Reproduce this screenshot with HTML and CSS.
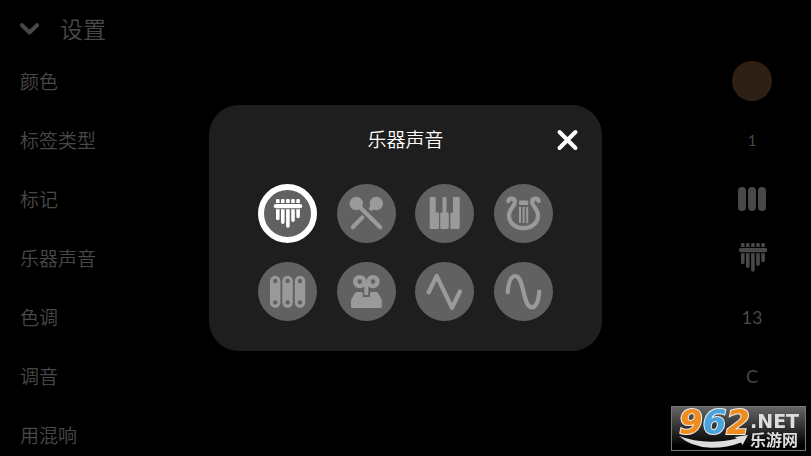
FILE: index.html
```html
<!DOCTYPE html>
<html lang="zh-CN">
<head>
  <meta charset="UTF-8" />
  <meta name="viewport" content="width=device-width, initial-scale=1.0" />
  <title>设置</title>
  <link rel="stylesheet" href="styles.css">
</head>
<body>

<main class="settings">
  <header class="settings-header">
    <button class="back-btn" aria-label="返回">
      <svg width="20" height="20" viewBox="0 0 20 20"><path d="M2 6.2l7.5 7.3L17 6.2" /></svg>
    </button>
    <h1>设置</h1>
  </header>

  <div class="row">
    <span id="color">颜色</span>
    <button class="value" aria-labelledby="color"><span class="swatch"></span></button>
  </div>
  <div class="row">
    <span id="label-type">标签类型</span>
    <button class="value small" aria-describedby="label-type">1</button>
  </div>
  <div class="row">
    <span id="marker">标记</span>
    <button class="value" aria-labelledby="marker">
      <svg class="marker" width="28" height="24" viewBox="0 0 28 24">
        <rect width="8" height="24" rx="4" />
        <rect x="10" width="8" height="24" rx="4" />
        <rect x="20" width="8" height="24" rx="4" />
      </svg>
    </button>
  </div>
  <div class="row">
    <span id="sound">乐器声音</span>
    <button class="value" aria-labelledby="sound">
      <svg class="icon"><use href="#kalimba" /></svg>
    </button>
  </div>
  <div class="row">
    <span id="keys">色调</span>
    <button class="value" aria-describedby="keys">13</button>
  </div>
  <div class="row">
    <span id="tuning">调音</span>
    <button class="value" aria-describedby="tuning">C</button>
  </div>
  <div class="row">
    <label for="reverb">用混响</label>
    <input class="switch" type="checkbox" id="reverb" />
  </div>
</main>

<div class="overlay">
  <section class="modal" role="dialog" aria-modal="true" aria-labelledby="modal-title">
    <header class="modal-header">
      <h2 id="modal-title">乐器声音</h2>
      <button class="close-btn" aria-label="关闭">
        <svg width="30" height="30" viewBox="0 0 30 30"><path d="M7.5 7l16 16M23.5 7l-16 16" /></svg>
      </button>
    </header>

    <div class="options">
      <label class="option">
        <input type="radio" name="instrument" aria-label="卡林巴" checked />
        <svg class="icon"><use href="#kalimba" /></svg>
      </label>
      <label class="option">
        <input type="radio" name="instrument" aria-label="马林巴" />
        <svg class="icon" viewBox="0 0 59 59">
          <circle cx="19.3" cy="19.5" r="6.7" />
          <circle cx="39.3" cy="19.5" r="6.7" />
          <path class="line" d="M19.3 19.5L43.2 43.3M25.2 33.6L15.8 43.3" />
          <path class="line butt" d="M38 20.8L32.8 26" />
        </svg>
      </label>
      <label class="option">
        <input type="radio" name="instrument" aria-label="钢琴" />
        <svg class="icon" viewBox="0 0 59 59">
          <path d="M15.7 13h4a1 1 0 0 1 1 1v14.5h2q1.3 0 1.3 1.3V43.5a1.5 1.5 0 0 1-1.5 1.5h-6.3a1.5 1.5 0 0 1-1.5-1.5V14a1 1 0 0 1 1-1z" />
          <path d="M28.5 13h2a1 1 0 0 1 1 1v14.5h1q1.3 0 1.3 1.3V43.5a1.5 1.5 0 0 1-1.5 1.5h-5.6a1.5 1.5 0 0 1-1.5-1.5V29.8q0-1.3 1.3-1.3h1V14a1 1 0 0 1 1-1z" />
          <path d="M39 13h4.7a1 1 0 0 1 1 1V43.5a1.5 1.5 0 0 1-1.5 1.5h-6.3a1.5 1.5 0 0 1-1.5-1.5V29.8q0-1.3 1.3-1.3H38V14a1 1 0 0 1 1-1z" />
        </svg>
      </label>
      <label class="option">
        <input type="radio" name="instrument" aria-label="竖琴" />
        <svg class="icon" viewBox="0 0 59 59">
          <path class="line" d="M14.3 17C15 13.6 20.8 13.6 20.9 18C21 22.5 15 24 15 31.5C15 39 21.5 44.2 29.5 44.2S44 39 44 31.5C44 24 38 22.5 38.1 18C38.2 13.6 44 13.6 44.7 17" />
          <rect x="25" y="16.5" width="9.3" height="4.5" rx="1" />
          <path d="M25 23h2v16h-2zM28.6 23h2v16h-2zM32.2 23h2v16h-2z" />
        </svg>
      </label>
      <label class="option">
        <input type="radio" name="instrument" aria-label="木琴" />
        <svg class="icon" viewBox="0 0 59 59">
          <rect x="12" y="13.7" width="10.4" height="32" rx="5.2" />
          <rect x="24.4" y="13.7" width="10.4" height="32" rx="5.2" />
          <rect x="36.8" y="13.7" width="10.4" height="32" rx="5.2" />
          <g class="hole">
            <circle cx="17.2" cy="19" r="2.2" />
            <circle cx="29.6" cy="19" r="2.2" />
            <circle cx="42" cy="19" r="2.2" />
            <circle cx="17.2" cy="40.4" r="2.2" />
            <circle cx="29.6" cy="40.4" r="2.2" />
            <circle cx="42" cy="40.4" r="2.2" />
          </g>
        </svg>
      </label>
      <label class="option">
        <input type="radio" name="instrument" aria-label="八音盒" />
        <svg class="icon" viewBox="0 0 59 59">
          <circle cx="22.7" cy="19.6" r="6.7" />
          <circle cx="36" cy="19.6" r="6.7" />
          <path d="M26 20h6.7l-1.4 5v8h-4v-8z" />
          <path d="M19.5 30h5.3l1 1.2V35H33v-3.8l1-1.2h5.5q1 0 1.5 1l3.3 6q.6 1 .6 2V44.6a1.5 1.5 0 0 1-1.5 1.5H15.5a1.5 1.5 0 0 1-1.5-1.5V39q0-1 .6-2l3.4-6q.5-1 1.5-1z" />
          <g class="hole">
            <circle cx="22.7" cy="19.6" r="2.3" />
            <circle cx="36" cy="19.6" r="2.3" />
          </g>
        </svg>
      </label>
      <label class="option">
        <input type="radio" name="instrument" aria-label="三角波" />
        <svg class="icon" viewBox="0 0 59 59"><path class="line" d="M13.7 30.2L21.7 14L37 45.8L45 29.5" /></svg>
      </label>
      <label class="option">
        <input type="radio" name="instrument" aria-label="正弦波" />
        <svg class="icon" viewBox="0 0 59 59"><path class="line" d="M13.7 30.2C14.5 20 17 14 21.4 14C30 14 29 45.3 37.5 45.3C42 45.3 44.5 39.5 45.3 29.5" /></svg>
      </label>
    </div>
  </section>
</div>

<div class="watermark">
  <div class="digits"><span>9</span><span class="blue">6</span><span>2</span></div>
  <div class="site">
    <b class="net">.NET</b>
    <b class="name">乐游网</b>
  </div>
  <svg class="swoosh" width="70" height="14" viewBox="0 0 70 14"><path d="M0 1Q26 11 58 3.5L55.5 2L69 0L63.5 10L62 7.5Q48 13 32 12.8Q12 12 0 1z" /></svg>
</div>

<svg width="0" height="0" aria-hidden="true">
  <symbol id="kalimba" viewBox="0 0 59 59">
    <rect x="15.8" y="20" width="28.4" height="4.3" rx="2" />
    <path d="M18 19v-3q0-1 1-1h1.6q1 0 1 1v3zM23 19v-3q0-1 1-1h1.6q1 0 1 1v3zM28.1 19v-3q0-1 1-1h1.6q1 0 1 1v3zM33.2 19v-3q0-1 1-1h1.6q1 0 1 1v3zM38.3 19v-3q0-1 1-1h1.6q1 0 1 1v3z" />
    <path d="M18 25.3h3.6v9.2a1.8 1.8 0 0 1-3.6 0zM23 25.3h3.6v13a1.8 1.8 0 0 1-3.6 0zM28.1 25.3h3.6v16.7a1.8 1.8 0 0 1-3.6 0zM33.2 25.3h3.6v11a1.8 1.8 0 0 1-3.6 0zM38.3 25.3h3.6v7.2a1.8 1.8 0 0 1-3.6 0z" />
  </symbol>
</svg>

</body>
</html>
```
FILE: styles.css
```css
* {
  box-sizing: border-box;
}
body {
  margin: 0;
  height: 100vh;
  overflow: hidden;
  background-color: #000;
  color: #fff;
  font-family: Lato, 'Noto Sans CJK SC', sans-serif;
  font-size: 19px;
  font-weight: 350;
}
button {
  padding: 0;
  border: none;
  background: none;
  color: inherit;
  font: inherit;
  cursor: pointer;
}
h1, h2 {
  margin: 0;
  font-weight: 350;
}
svg {
  display: block;
  fill: currentColor;
}
.icon {
  width: 59px;
  height: 59px;
}
.line {
  fill: none;
  stroke: currentColor;
  stroke-width: 4.2;
  stroke-linecap: round;
  stroke-linejoin: round;
}
.butt {
  stroke-linecap: butt;
}

/* settings list */
.settings {
  color: #484848;
}
.settings-header {
  display: flex;
  align-items: center;
  gap: 20px;
  height: 51px;
  padding: 6px 20px 0;
}
.settings-header h1 {
  font-size: 23px;
  line-height: 34px;
}
.back-btn path,
.close-btn path {
  fill: none;
  stroke: currentColor;
  stroke-width: 4;
  stroke-linecap: round;
  stroke-linejoin: round;
}
.row {
  display: flex;
  align-items: center;
  justify-content: space-between;
  height: 59px;
  padding: 0 29px 0 20px;
}
.value {
  display: flex;
  align-items: center;
  justify-content: center;
  width: 60px;
  height: 59px;
  font-size: 18px;
  font-weight: 400;
}
.small {
  font-size: 15px;
}
.swatch {
  width: 40px;
  height: 40px;
  border-radius: 50%;
  background-color: #2e2015;
}
.switch {
  appearance: none;
  width: 60px;
  height: 30px;
  margin: 0;
  border-radius: 15px;
  background-color: #0a0a0a;
}

/* instrument dialog */
.overlay {
  position: fixed;
  inset: 0;
  display: flex;
  align-items: center;
  justify-content: center;
}
.modal {
  width: 393px;
  max-width: 100%;
  padding: 20px 0 30px;
  border-radius: 30px;
  background-color: #1e1e1e;
}
.modal-header {
  display: grid;
  grid-template-columns: 1fr auto 1fr;
  align-items: center;
  padding: 0 20px;
  margin-bottom: 29px;
}
.modal-header h2 {
  grid-column: 2;
  font-size: 19px;
  line-height: 30px;
}
.close-btn {
  justify-self: end;
}
.options {
  display: grid;
  grid-template-columns: repeat(4, 59px);
  justify-content: space-between;
  row-gap: 19px;
  padding: 0 49px;
}
.option {
  display: grid;
  color: #9a9a9a;
  cursor: pointer;
}
.option input,
.option .icon {
  grid-area: 1 / 1;
}
.option input {
  appearance: none;
  width: 59px;
  height: 59px;
  margin: 0;
  border-radius: 50%;
  background-color: #616161;
}
.option input:checked {
  border: 6px solid #fff;
}
.option input:checked + .icon {
  color: #fff;
}
.hole {
  fill: #616161;
}

/* site badge in the corner */
.watermark {
  position: fixed;
  right: 5px;
  bottom: 5px;
  display: flex;
  width: 135px;
  height: 45px;
  padding-left: 7px;
  border: 1px solid #777;
  background: linear-gradient(#666, #000 90%);
  color: #ddd;
}
.digits {
  display: flex;
  font: italic bold 34px/30px 'DejaVu Sans', sans-serif;
  color: #f08c1e;
  -webkit-text-stroke: 2px #eee;
  paint-order: stroke fill;
}
.blue {
  color: #4aa3dc;
}
.site {
  display: flex;
  flex-direction: column;
  padding-top: 4px;
}
.net {
  font: bold 19px/20px 'DejaVu Sans', sans-serif;
}
.name {
  font: bold 16px/16px 'Noto Sans CJK SC', sans-serif;
}
.swoosh {
  position: absolute;
  left: 7px;
  bottom: 1px;
}
```
